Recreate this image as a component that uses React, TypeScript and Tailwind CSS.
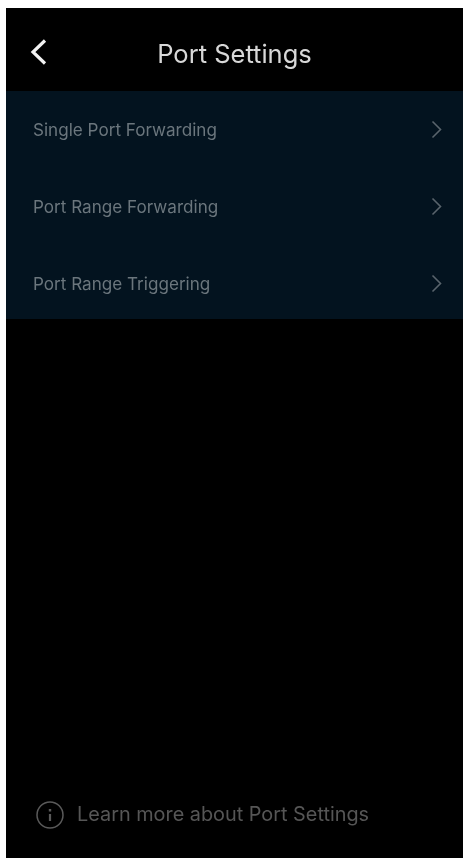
import React from 'react'

const rows = ['Single Port Forwarding', 'Port Range Forwarding', 'Port Range Triggering']

function Chevron() {
  return (
    <svg className="w-[11px] h-[19px]" viewBox="0 0 11 19" fill="none" stroke="#59646c" strokeWidth={1.6}>
      <path d="M1.5 1.5L9.5 9.5L1.5 17.5" />
    </svg>
  )
}

export default function App() {
  return (
    <div className="w-[465px] h-[859px] bg-white pl-[6px] pr-[2px] pt-[8px] pb-px font-['Inter',sans-serif]">
      <div className="h-full bg-black flex flex-col [filter:blur(0.5px)]">
        {/* Header */}
        <div className="h-[83px] shrink-0 flex items-center relative justify-center">
          <svg className="absolute left-[23px] top-[30px] w-[20px] h-[28px]" viewBox="0 0 20 28" fill="none" stroke="#f2f2f2" strokeWidth={3.2}>
            <path d="M16 2.5L4 14L16 25.5" />
          </svg>
          <h1 className="text-[25.5px] text-[#d8d8d8] font-normal pt-[10px]">Port Settings</h1>
        </div>

        {/* Rows */}
        <div className="h-[228px] bg-[#03131f] overflow-hidden">
          {rows.map((label) => (
            <div key={label} className="h-[77px] flex items-center justify-between pl-[27px] pr-[21px]">
              <span className="text-[17.1px] text-[#6b767d]">{label}</span>
              <Chevron />
            </div>
          ))}
        </div>

        {/* Footer */}
        <div className="mt-auto h-[85px] flex items-center gap-[13px] pl-[30px] pb-[2px]">
          <svg className="w-[28px] h-[28px]" viewBox="0 0 28 28" fill="none" stroke="#5a5a5a" strokeWidth={1.5}>
            <circle cx="14" cy="14" r="13" />
            <path d="M14 13V20" strokeWidth={2.2} />
            <path d="M14 8V10.5" strokeWidth={2.4} />
          </svg>
          <span className="text-[19.85px] text-[#565656]">Learn more about Port Settings</span>
        </div>
      </div>
    </div>
  )
}
